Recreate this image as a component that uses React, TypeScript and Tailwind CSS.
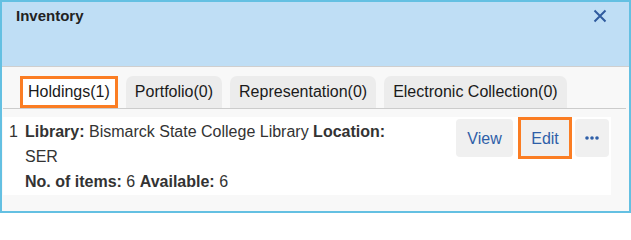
import * as React from "react";

const tabs = [
  { label: "Holdings(1)", active: true },
  { label: "Portfolio(0)", active: false },
  { label: "Representation(0)", active: false },
  { label: "Electronic Collection(0)", active: false },
];

function CloseIcon() {
  return (
    <svg width="14" height="14" viewBox="0 0 14 14" fill="none" stroke="#2f5b9e" strokeWidth="2">
      <path d="M1.5 1.5 L12.5 12.5 M12.5 1.5 L1.5 12.5" />
    </svg>
  );
}

function DotsIcon() {
  return (
    <svg width="14" height="4" viewBox="0 0 14 4" fill="#2f5fa8">
      <circle cx="2" cy="2" r="1.8" />
      <circle cx="7" cy="2" r="1.8" />
      <circle cx="12" cy="2" r="1.8" />
    </svg>
  );
}

export default function App() {
  return (
    <div className="flex h-[213px] w-[631px] flex-col overflow-hidden border-2 border-[#64c0e2] bg-[#f8f8f8] font-['Liberation_Sans',Arial,sans-serif]">
      <header className="flex h-[65px] shrink-0 items-start justify-between border-b border-[#cfcfcf] bg-[#bfdef5] pl-[14px] pr-[22px] pt-[4px]">
        <h1 className="text-[15px] font-bold leading-[20px] text-[#222]">Inventory</h1>
        <button className="mt-[3px]" aria-label="Close">
          <CloseIcon />
        </button>
      </header>

      <div className="ml-[1px] mr-[3px] mt-[9px] flex gap-2 border-b border-[#cccccc] pl-[17px]">
        {tabs.map((t) =>
          t.active ? (
            <div
              key={t.label}
              className="flex h-[32px] items-center border-[3px] border-[#fb7d23] bg-white px-[5px] text-[16px] text-[#1a1a1a]"
            >
              {t.label}
            </div>
          ) : (
            <div
              key={t.label}
              className="flex h-[32px] items-center rounded-t-[7px] bg-[#ececec] px-[9px] text-[16px] text-[#1a1a1a]"
            >
              {t.label}
            </div>
          ),
        )}
      </div>

      <div className="ml-[1px] mr-[18px] mt-[8px] flex h-[78px] items-start bg-white pl-[6px] pr-[2px] text-[16px] leading-[25px] text-[#333]">
        <span className="w-[16px] pt-[2px]">1</span>
        <div className="w-[380px] pt-[2px]">
          <p>
            <b>Library:</b> Bismarck State College Library <b>Location:</b> SER
          </p>
          <p>
            <b>No. of items:</b> 6 <b>Available:</b> 6
          </p>
        </div>
        <div className="ml-auto flex items-center">
          <button className="mr-[5px] h-[38px] w-[57px] rounded-[4px] bg-[#f0f0f0] text-[#2f5fa8]">View</button>
          <button className="h-[42px] w-[54px] border-[3px] border-[#fb7d23] bg-[#f0f0f0] text-[#2f5fa8]">Edit</button>
          <button className="ml-[3px] flex h-[38px] w-[34px] items-center justify-center rounded-[4px] bg-[#f0f0f0]">
            <DotsIcon />
          </button>
        </div>
      </div>
    </div>
  );
}
